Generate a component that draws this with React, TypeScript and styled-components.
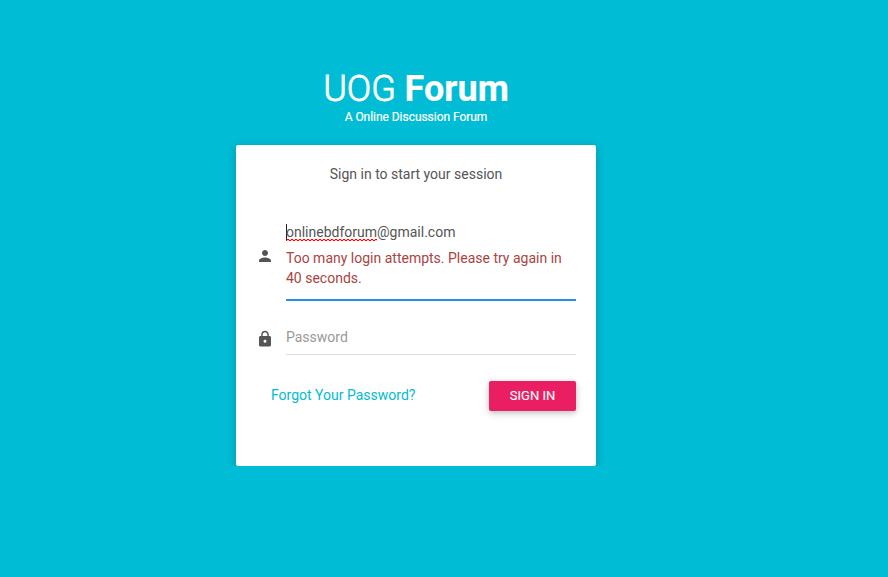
import React from "react";
import styled, { createGlobalStyle } from "styled-components";

const GlobalStyle = createGlobalStyle`
  * { box-sizing: border-box; }
  body { margin: 0; background: #00bcd4; font-family: Roboto, Arial, sans-serif; font-size: 14px; color: #555; overflow: hidden; }
`;

const Page = styled.main`
  width: 360px;
  margin: 0 0 0 236px;
  padding-top: 69px;
`;

const Logo = styled.header`
  display: flex;
  flex-direction: column;
  align-items: center;
  height: 76px;
  color: #fff;
`;

const Brand = styled.a`
  font-size: 36px;
  line-height: 40px;
  font-weight: 300;
  white-space: nowrap;
  -webkit-text-stroke: 0.8px #fff;
  b { font-weight: 700; -webkit-text-stroke: 0.15px #fff; }
`;

const Tagline = styled.small`
  font-size: 12px;
  line-height: 16px;
  letter-spacing: -0.04px;
  -webkit-text-stroke: 0.2px #fff;
`;

const Card = styled.section`
  height: 321px;
  padding: 19px 20px 20px;
  background: #fff;
  border-radius: 2px;
  box-shadow: 0 2px 10px rgba(0, 0, 0, 0.2);
`;

const Message = styled.div`
  text-align: center;
  line-height: 20px;
  margin-bottom: 38px;
`;

const Field = styled.div`
  display: flex;
  align-items: center;
  margin-bottom: 26px;
`;

const Addon = styled.span<{ $lift: number }>`
  width: 30px;
  height: 18px;
  margin-bottom: ${(p) => p.$lift}px;
  svg { display: block; width: 18px; height: 18px; fill: #555; }
`;

const Line = styled.div<{ $active?: boolean }>`
  flex: 1;
  line-height: 20px;
  border-bottom: ${(p) => (p.$active ? "2px solid #1f91f3" : "1px solid #ddd")};
`;

const Value = styled.div`
  display: flex;
  height: 26px;
  white-space: nowrap;
`;

const Caret = styled.i`
  width: 1px;
  height: 17px;
  margin: 2px -1px 0 0;
  background: #222;
`;

/* Two offset rows of dashes form the spell-check squiggle. */
const Misspelled = styled.span`
  height: 20px;
  background:
    linear-gradient(90deg, #f00 0 2px, #ff000040 2px 4px) 1px 17px / 4px 1px repeat-x,
    linear-gradient(90deg, #f00 0 2px, #ff000040 2px 4px) 3px 18px / 4px 1px repeat-x;
`;

const ErrorText = styled.div`
  color: #a94442;
  height: 51px;
`;

const Placeholder = styled.div`
  height: 27px;
  color: #999;
`;

const Actions = styled.div`
  display: flex;
  justify-content: space-between;
  align-items: flex-start;
  padding-left: 15px;
`;

const Forgot = styled.a`
  color: #00bcd4;
  line-height: 20px;
  margin-top: 4px;
`;

const Button = styled.button`
  width: 87px;
  height: 30px;
  border: 0;
  border-radius: 2px;
  padding: 0;
  background: #e91e63;
  color: #fff;
  font: 400 13px/18px Roboto, sans-serif;
  -webkit-text-stroke: 0.1px #fff;
  box-shadow: 0 2px 5px rgba(0, 0, 0, 0.16), 0 2px 10px rgba(0, 0, 0, 0.12);
`;

export default function App() {
  return (
    <>
      <GlobalStyle />
      <Page>
        <Logo>
          <Brand>UOG <b>Forum</b></Brand>
          <Tagline>A Online Discussion Forum</Tagline>
        </Logo>
        <Card>
          <Message>Sign in to start your session</Message>
          <Field>
            <Addon $lift={12}>
              <svg viewBox="0 0 24 24"><path d="M12 12c2.21 0 4-1.79 4-4s-1.79-4-4-4-4 1.79-4 4 1.79 4 4 4zm0 2c-2.67 0-8 1.34-8 4v2h16v-2c0-2.66-5.33-4-8-4z" /></svg>
            </Addon>
            <Line $active>
              <Value><Caret /><Misspelled>onlinebdforum</Misspelled>@gmail.com</Value>
              <ErrorText>Too many login attempts. Please try again in 40 seconds.</ErrorText>
            </Line>
          </Field>
          <Field>
            <Addon $lift={4}>
              <svg viewBox="0 0 24 24"><path d="M18 8h-1V6c0-2.76-2.24-5-5-5S7 3.24 7 6v2H6c-1.1 0-2 .9-2 2v10c0 1.1.9 2 2 2h12c1.1 0 2-.9 2-2V10c0-1.1-.9-2-2-2zm-6 9c-1.1 0-2-.9-2-2s.9-2 2-2 2 .9 2 2-.9 2-2 2zm3.1-9H8.9V6c0-1.71 1.39-3.1 3.1-3.1 1.71 0 3.1 1.39 3.1 3.1v2z" /></svg>
            </Addon>
            <Line><Placeholder>Password</Placeholder></Line>
          </Field>
          <Actions>
            <Forgot>Forgot Your Password?</Forgot>
            <Button>SIGN IN</Button>
          </Actions>
        </Card>
      </Page>
    </>
  );
}
